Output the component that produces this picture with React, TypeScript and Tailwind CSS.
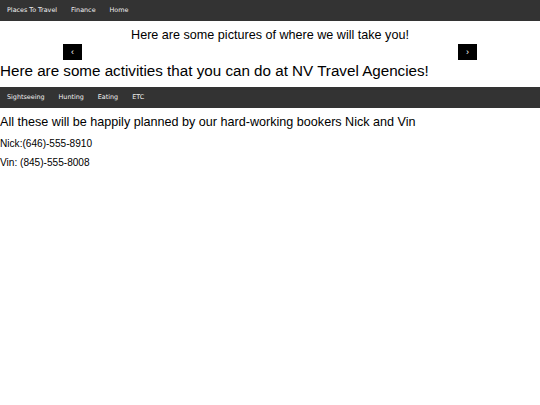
const topLinks = ['Places To Travel', 'Finance', 'Home']
const activityLinks = ['Sightseeing', 'Hunting', 'Eating', 'ETC']

function NavBar({ links }: { links: string[] }) {
  return (
    <nav className="flex h-[21px] items-center bg-[#333333] font-['DejaVu_Sans',sans-serif]">
      {links.map((l) => (
        <a key={l} href="#" className="px-[7px] text-[6.4px] text-[#f2f2f2]">
          {l}
        </a>
      ))}
    </nav>
  )
}

export default function App() {
  return (
    <div className="min-h-[405px] bg-white font-['Liberation_Sans',Arial,sans-serif] text-black">
      <NavBar links={topLinks} />

      {/* slideshow */}
      <h2 className="mt-[7px] text-center text-[12.6px] leading-[15px]">
        Here are some pictures of where we will take you!
      </h2>
      <div className="mx-[63px] mt-[1px] flex justify-between">
        <button className="flex h-[16px] w-[19px] items-center justify-center bg-black text-[9px] leading-none text-white">
          ‹
        </button>
        <button className="flex h-[16px] w-[19px] items-center justify-center bg-black text-[9px] leading-none text-white">
          ›
        </button>
      </div>

      <h1 className="mt-[2px] text-[15.2px] leading-[18px]">
        Here are some activities that you can do at NV Travel Agencies!
      </h1>

      <div className="mt-[7px]">
        <NavBar links={activityLinks} />
      </div>

      <p className="mt-[7px] text-[12.6px] leading-[15px]">
        All these will be happily planned by our hard-working bookers Nick and Vin
      </p>
      <p className="mt-[8px] text-[10.1px] leading-[12px]">Nick:(646)-555-8910</p>
      <p className="mt-[7px] text-[10.1px] leading-[12px]">Vin: (845)-555-8008</p>
    </div>
  )
}
